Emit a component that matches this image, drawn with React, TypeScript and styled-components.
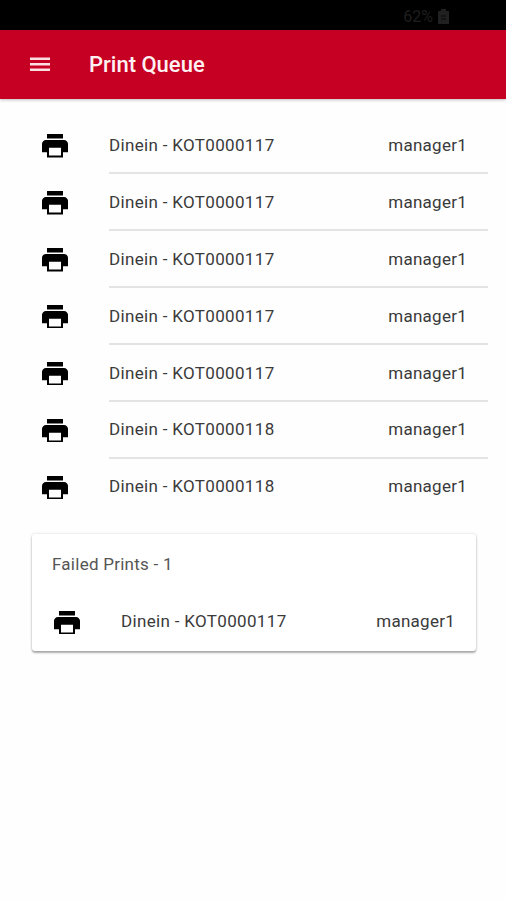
import React from "react";
import styled, { createGlobalStyle } from "styled-components";

const GlobalStyle = createGlobalStyle`
  * { box-sizing: border-box; }
  body { margin: 0; background: #fefefe; font-family: Roboto, "Liberation Sans", sans-serif; }
`;

const Screen = styled.div`
  height: 900px;
  overflow: hidden;
  background: #fefefe;
`;

const StatusBar = styled.div`
  height: 30px;
  padding: 2px 57px 0 0;
  display: flex;
  align-items: center;
  justify-content: flex-end;
  gap: 5px;
  background: #000;
  color: #1e1e1e;
  font-size: 16px;
`;

const Toolbar = styled.header`
  height: 69px;
  padding: 0 29px 0 30px;
  display: flex;
  align-items: center;
  gap: 39px;
  background: #c60022;
  box-shadow: 0 1px 3px rgba(0, 0, 0, 0.25);
`;

const MenuIcon = styled.svg`
  width: 20px;
  height: 15px;
  fill: #fbdde2;
`;

const Title = styled.h1`
  margin: 0;
  color: #fff0f2;
  font-size: 22px;
  font-weight: 500;
  line-height: 30px;
`;

const List = styled.ul<{ $inCard?: boolean }>`
  list-style: none;
  margin: 0;
  padding: ${(p) => (p.$inCard ? "0 0 0 22px" : "18.6px 18px 0 42px")};
`;

const Row = styled.li`
  display: flex;
  align-items: center;
  height: 56.9px;
`;

const PrintIcon = styled.svg`
  flex: none;
  width: 26px;
  height: 23.5px;
  margin: 0 41px 0 0;
  fill: #000;
`;

const RowBody = styled.div<{ $divided: boolean }>`
  flex: 1;
  height: 100%;
  padding-right: 21px;
  display: flex;
  align-items: center;
  justify-content: space-between;
  border-bottom: 2px solid ${(p) => (p.$divided ? "#e4e4e4" : "transparent")};
  color: #3a3a3a;
  font-size: 17px;
  line-height: 24px;
`;

const Label = styled.span`
  letter-spacing: 0.33px;
`;

const User = styled.span`
  letter-spacing: 0.25px;
`;

const Card = styled.section`
  margin: 18.1px 30px 0 32px;
  height: 117px;
  border-radius: 3px;
  background: #fff;
  box-shadow: 0 2px 2px rgba(0, 0, 0, 0.3), 0 0 3px rgba(0, 0, 0, 0.16);
`;

const CardTitle = styled.h2`
  margin: 0;
  padding: 18px 20px;
  color: #555;
  font-size: 17px;
  font-weight: 400;
  line-height: 24px;
  letter-spacing: 0.25px;
`;

function Battery() {
  return (
    <svg width="11" height="15" viewBox="0 0 11 15">
      <path d="M3 0h5v2h3v13H0V2h3z" fill="#202020" />
      <path d="M3 7h5M3 10h5" stroke="#080808" strokeWidth="1.2" />
    </svg>
  );
}

function PrintRow({ name, divided = false }: { name: string; divided?: boolean }) {
  return (
    <Row>
      <PrintIcon viewBox="48 64 416 384" preserveAspectRatio="none">
        <path d="M399.95 160h-287.9C76.824 160 48 188.803 48 224v138.667h79.899V448H384.1v-85.333H464V224c0-35.197-28.825-64-64.05-64zM352 416H160V288h192v128zM384.101 64H127.899v74H384.1V64z" />
      </PrintIcon>
      <RowBody $divided={divided}>
        <Label>{name}</Label>
        <User>manager1</User>
      </RowBody>
    </Row>
  );
}

const queue = ["117", "117", "117", "117", "117", "118", "118"].map((n) => `Dinein - KOT0000${n}`);

export default function App() {
  return (
    <Screen>
      <GlobalStyle />
      <StatusBar>
        <span>62%</span>
        <Battery />
      </StatusBar>
      <Toolbar>
        <MenuIcon viewBox="0 0 20 15">
          <path d="M0 .5h20v2.5H0zM0 6h20v2.5H0zM0 11.5h20V14H0z" />
        </MenuIcon>
        <Title>Print Queue</Title>
      </Toolbar>
      <List>
        {queue.map((name, i) => (
          <PrintRow key={i} name={name} divided={i < queue.length - 1} />
        ))}
      </List>
      <Card>
        <CardTitle>Failed Prints - 1</CardTitle>
        <List $inCard>
          <PrintRow name="Dinein - KOT0000117" />
        </List>
      </Card>
    </Screen>
  );
}
